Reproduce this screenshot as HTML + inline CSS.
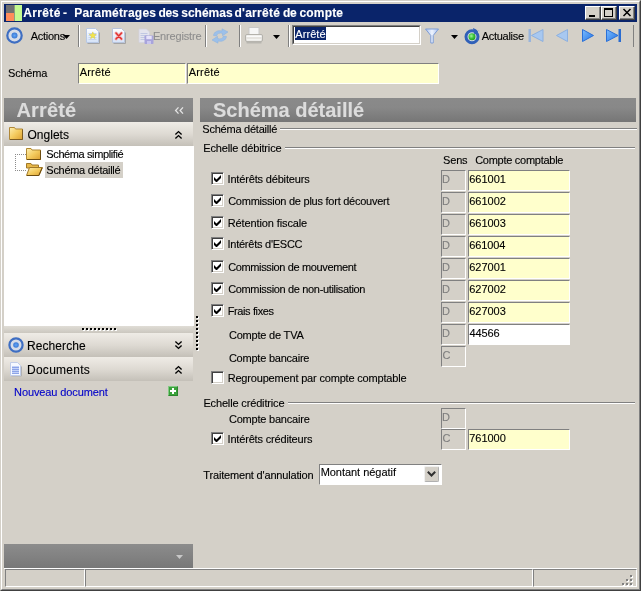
<!DOCTYPE html>
<html><head><meta charset="utf-8">
<style>
*{box-sizing:border-box;margin:0;padding:0}
html,body{width:641px;height:591px;overflow:hidden;background:#d4d0c8}
body{font-family:"Liberation Sans",sans-serif;font-size:11px;color:#000;position:relative}
.a{position:absolute}
.t{position:absolute;white-space:nowrap;line-height:normal;-webkit-text-stroke:0.12px currentColor}
.wb{position:absolute;top:6px;width:16px;height:14px;background:#d4d0c8;border:1px solid;border-color:#fff #404040 #404040 #fff;box-shadow:inset -1px -1px 0 #808080}
.inp{position:absolute;border:1px solid;border-color:#808080 #fff #fff #808080;background:#ffffcc}
.sb{position:absolute;left:441px;width:25px;height:21px;border:1px solid;border-color:#808080 #fff #fff #808080;background:#d4d0c8}
.hdr{position:absolute;height:24px;background:linear-gradient(#8a8a8a,#888 40%,#767676)}
.bar{position:absolute;left:4px;width:189px;background:linear-gradient(#efece6,#dedad3 50%,#c4c0b8)}
.cb{position:absolute;left:211px;width:13px;height:13px;background:#fff;border:1px solid;border-color:#808080 #fff #fff #808080;box-shadow:inset 1px 1px 0 #404040,inset -1px -1px 0 #d4d0c8}
.ln{position:absolute;height:2px;border-top:1px solid #808080;border-bottom:1px solid #fff}
.vs{position:absolute;top:25px;width:2px;height:22px;border-left:1px solid #808080;border-right:1px solid #fff}
svg{position:absolute;overflow:visible}
</style></head><body>
<!-- window frame -->
<div class="a" style="left:0;top:0;width:641px;height:591px;border:1px solid;border-color:#d4d0c8 #404040 #404040 #d4d0c8"></div>
<div class="a" style="left:1px;top:1px;width:639px;height:589px;border:1px solid;border-color:#fff #808080 #808080 #fff"></div>
<div class="a" style="left:4px;top:4px;width:633px;height:18px;background:#0a246a"></div>
<!-- title icon -->
<div class="a" style="left:6px;top:5px;width:8px;height:8px;background:#707070"></div>
<div class="a" style="left:6px;top:13px;width:8px;height:8px;background:#ff8c5a"></div>
<div class="a" style="left:14px;top:5px;width:8px;height:16px;background:#c4fa90;border-left:1px solid #8ca07c"></div>
<!-- window buttons -->
<div class="wb" style="left:585px"><div class="a" style="left:3px;top:8px;width:6px;height:2px;background:#000"></div></div>
<div class="wb" style="left:601px"><div class="a" style="left:2px;top:1px;width:9px;height:9px;border:1px solid #000;border-top-width:2px"></div></div>
<div class="wb" style="left:619px"><svg style="left:3px;top:2px" width="8" height="7" viewBox="0 0 8 7"><path d="M0.5 0 L7.5 7 M7.5 0 L0.5 7" stroke="#000" stroke-width="1.500" fill="none"/></svg></div>
<!-- toolbar -->
<svg style="left:6.300px;top:27.400px" width="17" height="17" viewBox="0 0 17 17"><defs><radialGradient id="cd"><stop offset="0" stop-color="#62a4f4"/><stop offset="1" stop-color="#3a78d4"/></radialGradient></defs><circle cx="8.500" cy="8.500" r="7.200" fill="#d6dce8" stroke="#3e6ec2" stroke-width="2.200"/><circle cx="8.500" cy="8.500" r="3" fill="url(#cd)"/></svg>
<svg style="left:63px;top:35px" width="7" height="4" viewBox="0 0 7 4"><path d="M0 0H7L3.5 4Z" fill="#000"/></svg>
<div class="vs" style="left:78px"></div>
<!-- new doc icon -->
<svg style="left:86px;top:28px" width="15" height="16" viewBox="0 0 15 16"><defs><linearGradient id="pg" x1="0" y1="0" x2="0" y2="1"><stop offset="0" stop-color="#fff"/><stop offset="1" stop-color="#d4e2f8"/></linearGradient></defs><path d="M1.500 15.500H13.500V4.500" stroke="#a4a4a4" fill="none"/><path d="M.5 .5H9.500L12.500 3.500V14.500H.5Z" fill="url(#pg)" stroke="#b8c8e4"/><path d="M2.500 5.500H10.500M2.500 7.500H10.500M2.500 9.500H10.500M2.500 11.500H10.500" stroke="#c4d4f0"/><path d="M6.800 3.900L7.740 6.310L10.320 6.460L8.320 8.090L8.970 10.590L6.800 9.200L4.630 10.590L5.280 8.090L3.280 6.460L5.860 6.310Z" fill="#f4e648" stroke="#d8cc50" stroke-width=".6"/></svg>
<!-- delete icon -->
<svg style="left:112px;top:28px" width="15" height="16" viewBox="0 0 15 16"><path d="M1.500 15.500H13.500V4.500" stroke="#a4a4a4" fill="none"/><path d="M.5 .5H9.500L12.500 3.500V14.500H.5Z" fill="url(#pg)" stroke="#b8c4dc"/><path d="M4 5L9.500 11M9.500 5L4 11" stroke="#f4b0b0" stroke-width="3" stroke-linecap="round"/><path d="M4 5L9.500 11M9.500 5L4 11" stroke="#e03030" stroke-width="1.400" stroke-linecap="round"/></svg>
<!-- save icon disabled -->
<svg style="left:138px;top:28px" width="16" height="17" viewBox="0 0 16 17"><path d="M1 1H8.500L11.500 4V14.500H1Z" fill="#e4e4ee" stroke="#d2d2de" stroke-width=".8"/><path d="M2.500 5.500H9.500M2.500 7.500H9.500M2.500 9.500H9.500M2.500 11.500H7" stroke="#b8c0e0" stroke-width=".8"/><rect x="6.500" y="7.500" width="9" height="8.500" rx=".8" fill="#a8a4dc"/><rect x="8.300" y="8" width="5.400" height="3.200" fill="#e6e2fa"/><rect x="9" y="13" width="4" height="3" fill="#cac6ee"/></svg>
<div class="vs" style="left:205px"></div>
<!-- refresh disabled -->
<svg style="left:212px;top:28px" width="16" height="16" viewBox="0 0 16 16"><path d="M1.500 7.500C2 3.500 6 2 10 3L10 .8L16 4L10.500 7.700L10.500 5.500C7.500 4.500 5 5.500 4.500 8Z" fill="#9cc0ea" stroke="#88b0de" stroke-width=".5"/><path d="M14.500 8.500C14 12.500 10 14 6 13L6 15.200L0 12L5.500 8.300L5.500 10.500C8.500 11.500 11 10.500 11.500 8Z" fill="#9cc0ea" stroke="#88b0de" stroke-width=".5"/></svg>
<div class="vs" style="left:239px"></div>
<!-- printer -->
<svg style="left:245px;top:27px" width="18" height="17" viewBox="0 0 18 17"><rect x="4" y=".5" width="10" height="8" fill="#f6f6f6" stroke="#c8c8c8"/><rect x=".5" y="7.500" width="17" height="7" rx="1.500" fill="#e6e4e0" stroke="#b4b2ac"/><rect x="1.500" y="8.500" width="15" height="1.500" fill="#fafafa"/><rect x="2" y="12" width="14" height="1.500" fill="#f4f4f2"/><rect x="1.500" y="14.500" width="15" height="2" fill="#b8b6b0"/></svg>
<svg style="left:273px;top:35px" width="7" height="4" viewBox="0 0 7 4"><path d="M0 0H7L3.500 4Z" fill="#000"/></svg>
<div class="vs" style="left:288px"></div>
<!-- text field -->
<div class="a" style="left:292px;top:25px;width:129px;height:20px;background:#fff;border:1px solid;border-color:#808080 #fff #fff #808080"></div>
<div class="a" style="left:293px;top:26px;width:127px;height:18px;border:1px solid;border-color:#404040 #d4d0c8 #d4d0c8 #404040"></div>
<div class="a" style="left:295px;top:27px;width:31px;height:13px;background:#0a246a"></div>
<!-- funnel -->
<svg style="left:425px;top:28px" width="14" height="16" viewBox="0 0 14 16"><defs><linearGradient id="fn" x1="0" y1="0" x2="1" y2="0"><stop offset="0" stop-color="#a8c0ee"/><stop offset=".5" stop-color="#eef4fe"/><stop offset="1" stop-color="#a8c0ee"/></linearGradient><radialGradient id="gb" cx=".4" cy=".4" r=".7"><stop offset="0" stop-color="#a4f49c"/><stop offset=".5" stop-color="#3cc43c"/><stop offset="1" stop-color="#1c941c"/></radialGradient></defs><path d="M.5 1H13.500L8.200 7.500V15H5.800V7.500Z" fill="url(#fn)" stroke="#7c9cd6"/></svg>
<svg style="left:451px;top:35px" width="7" height="4" viewBox="0 0 7 4"><path d="M0 0H7L3.500 4Z" fill="#000"/></svg>
<!-- actualise icon -->
<svg style="left:464px;top:28px" width="17" height="17" viewBox="0 0 17 17"><circle cx="8" cy="8.700" r="6" fill="#d8dee8" stroke="#3060b8" stroke-width="3"/><path d="M9 0L15.500 3L10.500 7Z" fill="#3060b8"/><path d="M12.500 .5L16 5.500" stroke="#d4d0c8" stroke-width="1.200"/><circle cx="8" cy="8.700" r="3.500" fill="url(#gb)"/></svg>
<!-- nav icons -->
<svg style="left:528px;top:29px" width="16" height="13" viewBox="0 0 16 13"><rect x="0.500" y="0" width="2.500" height="13" fill="#98b4dc"/><path d="M15 .5V12.500L3.500 6.500Z" fill="#a8c8f0" stroke="#8cb0e0"/></svg>
<svg style="left:556px;top:29px" width="12" height="13" viewBox="0 0 12 13"><path d="M11.500 .5V12.500L.5 6.500Z" fill="#a8c8f0" stroke="#8cb0e0"/></svg>
<svg style="left:582px;top:29px" width="12" height="13" viewBox="0 0 12 13"><defs><linearGradient id="ng" x1="0" y1="0" x2="1" y2="1"><stop offset="0" stop-color="#7cbcff"/><stop offset="1" stop-color="#2474e4"/></linearGradient></defs><path d="M.5 .5V12.500L11.500 6.500Z" fill="url(#ng)" stroke="#2a70d8"/></svg>
<svg style="left:606px;top:29px" width="16" height="13" viewBox="0 0 16 13"><path d="M.5 .5V12.500L12 6.500Z" fill="url(#ng)" stroke="#2a70d8"/><rect x="12.500" y="0" width="2.500" height="13" fill="#2a6cd0"/></svg>
<div class="a" style="left:633px;top:25px;width:1px;height:22px;background:#808080"></div>
<!-- schema row -->
<div class="inp" style="left:78px;top:63px;width:108px;height:21px"></div>
<div class="inp" style="left:187px;top:63px;width:252px;height:21px"></div>
<!-- left panel -->
<div class="hdr" style="left:4px;top:98px;width:189px"></div>
<svg style="left:175px;top:107px" width="9" height="7" viewBox="0 0 9 7"><path d="M3.500 .4L.6 3.500 3.500 6.600M8 .4L5.100 3.500 8 6.600" stroke="#e4e4e4" stroke-width="1.300" fill="none"/></svg>
<div class="bar" style="top:122px;height:24px"></div>
<!-- folder icon onglets -->
<svg style="left:9px;top:126px" width="15" height="14" viewBox="0 0 15 14"><defs><linearGradient id="fg" x1="0" y1="0" x2="1" y2="1"><stop offset="0" stop-color="#fdeeb0"/><stop offset=".5" stop-color="#f4cc60"/><stop offset="1" stop-color="#dca030"/></linearGradient></defs><path d="M.5 1.500H5.500L6.500 3H13.500V13.500H.5Z" fill="url(#fg)" stroke="#b08838"/><path d="M13.500 3.500V13.500H1" stroke="#7c5c20" fill="none"/></svg>
<svg style="left:175px;top:131px" width="7" height="8" viewBox="0 0 7 8"><path d="M.4 3.500L3.500 .6 6.600 3.500M.4 7.500L3.500 4.600 6.600 7.500" stroke="#000" stroke-width="1.400" fill="none"/></svg>
<div class="a" style="left:4px;top:146px;width:190px;height:180px;background:#fff"></div>
<!-- tree lines -->
<div class="a" style="left:15px;top:154px;width:1px;height:17px;border-left:1px dotted #8c8c8c"></div>
<div class="a" style="left:15px;top:154px;width:11px;height:1px;border-top:1px dotted #8c8c8c"></div>
<div class="a" style="left:15px;top:170px;width:11px;height:1px;border-top:1px dotted #8c8c8c"></div>
<svg style="left:26px;top:148px" width="16" height="12" viewBox="0 0 16 12"><path d="M.5 .5H5L6 2H14.500V11.500H.5Z" fill="url(#fg)" stroke="#b08830"/><path d="M14.500 2.500V11.500H1" stroke="#6c4c10" fill="none"/></svg>
<div class="a" style="left:45px;top:162px;width:78px;height:16px;background:#d4d0c8"></div>
<svg style="left:26px;top:163px" width="17" height="13" viewBox="0 0 17 13"><path d="M.5 .5H5L6 2H12.500V5H.5Z" fill="#e8b848" stroke="#a07828"/><path d="M3.500 4.500H16.500L13 12.500H.5Z" fill="url(#fg)" stroke="#a07828"/><path d="M16 5L12.800 12.500H1" stroke="#6c4c10" fill="none"/></svg>
<!-- splitter -->
<div class="a" style="left:4px;top:326px;width:189px;height:7px;background:linear-gradient(#e0ddd6,#cbc7bf)"></div>
<div class="a" style="left:83px;top:329px;width:34px;height:2px;background:repeating-linear-gradient(90deg,#fff 0,#fff 2px,transparent 2px,transparent 4px)"></div>
<div class="a" style="left:82px;top:328px;width:34px;height:2px;background:repeating-linear-gradient(90deg,#000 0,#000 2px,transparent 2px,transparent 4px)"></div>
<div class="bar" style="top:333px;height:24px"></div>
<svg style="left:8px;top:337px" width="16" height="16" viewBox="0 0 16 16"><circle cx="8" cy="8" r="6.600" fill="#d6dce8" stroke="#3e6ec2" stroke-width="2.200"/><circle cx="8" cy="8" r="2.800" fill="url(#cd)"/></svg>
<svg style="left:175px;top:341px" width="7" height="8" viewBox="0 0 7 8"><path d="M.4 .5L3.500 3.400 6.600 .5M.4 4.500L3.500 7.400 6.600 4.500" stroke="#000" stroke-width="1.400" fill="none"/></svg>
<div class="bar" style="top:357px;height:24px"></div>
<svg style="left:10px;top:362px" width="13" height="15" viewBox="0 0 13 15"><path d="M1.500 14H11.500V4.500" stroke="#b0b0b0" fill="none"/><path d="M.5 .5H7.500L10.500 3.500V13.500H.5Z" fill="#f6f9ff" stroke="#c0cce8"/><path d="M2 5.500H9M2 7.500H9M2 9.500H9M2 11.500H9" stroke="#8ca4e8"/><path d="M2 4.500H9M2 6.500H9M2 8.500H9M2 10.500H9" stroke="#c4d2f8"/></svg>
<svg style="left:175px;top:366px" width="7" height="8" viewBox="0 0 7 8"><path d="M.4 3.500L3.500 .6 6.600 3.500M.4 7.500L3.500 4.600 6.600 7.500" stroke="#000" stroke-width="1.400" fill="none"/></svg>
<!-- green plus -->
<div class="a" style="left:168px;top:386px;width:10px;height:10px;background:#3aa23a;border:1px solid;border-color:#84c884 #2c842c #2c842c #84c884"></div>
<div class="a" style="left:172px;top:388px;width:2px;height:6px;background:#fff"></div>
<div class="a" style="left:170px;top:390px;width:6px;height:2px;background:#fff"></div>
<!-- bottom bar -->
<div class="a" style="left:4px;top:544px;width:189px;height:24px;background:linear-gradient(#8c8c8c,#787878)"></div>
<svg style="left:176px;top:555px" width="7" height="4" viewBox="0 0 7 4"><path d="M0 0H7L3.500 4Z" fill="#c8c8c8"/></svg>
<!-- vertical splitter dots -->
<div class="a" style="left:197px;top:317px;width:2px;height:34px;background:repeating-linear-gradient(180deg,#fff 0,#fff 2px,transparent 2px,transparent 4px)"></div>
<div class="a" style="left:196px;top:316px;width:2px;height:34px;background:repeating-linear-gradient(180deg,#000 0,#000 2px,transparent 2px,transparent 4px)"></div>
<!-- right panel -->
<div class="hdr" style="left:200px;top:98px;width:436px"></div>
<div class="ln" style="left:280px;top:128px;width:357px"></div>
<div class="ln" style="left:285px;top:147px;width:350px"></div>
<div class="ln" style="left:288px;top:402px;width:347px"></div>
<div class="sb" style="top:170px"></div>
<div class="inp" style="left:468px;top:170px;width:102px;height:21px;background:#ffffcc"></div>
<div class="sb" style="top:192px"></div>
<div class="inp" style="left:468px;top:192px;width:102px;height:21px;background:#ffffcc"></div>
<div class="sb" style="top:214px"></div>
<div class="inp" style="left:468px;top:214px;width:102px;height:21px;background:#ffffcc"></div>
<div class="sb" style="top:236px"></div>
<div class="inp" style="left:468px;top:236px;width:102px;height:21px;background:#ffffcc"></div>
<div class="sb" style="top:258px"></div>
<div class="inp" style="left:468px;top:258px;width:102px;height:21px;background:#ffffcc"></div>
<div class="sb" style="top:280px"></div>
<div class="inp" style="left:468px;top:280px;width:102px;height:21px;background:#ffffcc"></div>
<div class="sb" style="top:302px"></div>
<div class="inp" style="left:468px;top:302px;width:102px;height:21px;background:#ffffcc"></div>
<div class="sb" style="top:324px"></div>
<div class="inp" style="left:468px;top:324px;width:102px;height:21px;background:#fff"></div>
<div class="sb" style="top:346px"></div>
<div class="sb" style="top:408px"></div>
<div class="sb" style="top:429px"></div>
<div class="inp" style="left:468px;top:429px;width:102px;height:21px"></div>
<div class="cb" style="top:172px"><svg style="left:2px;top:2px" width="7" height="7" viewBox="0 0 7 7"><path d="M0 2L0 5L2 7H3L7 3V0L2.500 4.500Z" fill="#000"/></svg></div>
<div class="cb" style="top:194px"><svg style="left:2px;top:2px" width="7" height="7" viewBox="0 0 7 7"><path d="M0 2L0 5L2 7H3L7 3V0L2.500 4.500Z" fill="#000"/></svg></div>
<div class="cb" style="top:216px"><svg style="left:2px;top:2px" width="7" height="7" viewBox="0 0 7 7"><path d="M0 2L0 5L2 7H3L7 3V0L2.500 4.500Z" fill="#000"/></svg></div>
<div class="cb" style="top:237px"><svg style="left:2px;top:2px" width="7" height="7" viewBox="0 0 7 7"><path d="M0 2L0 5L2 7H3L7 3V0L2.500 4.500Z" fill="#000"/></svg></div>
<div class="cb" style="top:260px"><svg style="left:2px;top:2px" width="7" height="7" viewBox="0 0 7 7"><path d="M0 2L0 5L2 7H3L7 3V0L2.500 4.500Z" fill="#000"/></svg></div>
<div class="cb" style="top:282px"><svg style="left:2px;top:2px" width="7" height="7" viewBox="0 0 7 7"><path d="M0 2L0 5L2 7H3L7 3V0L2.500 4.500Z" fill="#000"/></svg></div>
<div class="cb" style="top:304px"><svg style="left:2px;top:2px" width="7" height="7" viewBox="0 0 7 7"><path d="M0 2L0 5L2 7H3L7 3V0L2.500 4.500Z" fill="#000"/></svg></div>
<div class="cb" style="top:371px"></div>
<div class="cb" style="top:432px"><svg style="left:2px;top:2px" width="7" height="7" viewBox="0 0 7 7"><path d="M0 2L0 5L2 7H3L7 3V0L2.500 4.500Z" fill="#000"/></svg></div>
<!-- combo -->
<div class="a" style="left:319px;top:464px;width:123px;height:21px;background:#fff;border:1px solid;border-color:#808080 #fff #fff #808080"></div>
<div class="a" style="left:424px;top:466px;width:15px;height:16px;background:#d4d0c8;border:1px solid;border-color:#f0f0f0 #b0b0b0 #b0b0b0 #f0f0f0;border-radius:2px"></div>
<svg style="left:427px;top:471px" width="9" height="6" viewBox="0 0 9 6"><path d="M.8 .8L4.500 4.500 8.200 .8" stroke="#303030" stroke-width="2" fill="none"/></svg>
<!-- status bar -->
<div class="a" style="left:4px;top:568px;width:633px;height:1px;background:#fff"></div>
<div class="a" style="left:5px;top:569px;width:80px;height:18px;border:1px solid;border-color:#808080 #fff #fff #808080"></div>
<div class="a" style="left:85px;top:569px;width:448px;height:18px;border:1px solid;border-color:#808080 #fff #fff #808080"></div>
<div class="a" style="left:533px;top:569px;width:104px;height:18px;border:1px solid;border-color:#808080 #fff #fff #808080"></div>
<svg style="left:622px;top:575px" width="11" height="11" viewBox="0 0 11 11"><g fill="#fff" transform="translate(1 1)"><rect x="8" y="0" width="2" height="2"/><rect x="4" y="4" width="2" height="2"/><rect x="8" y="4" width="2" height="2"/><rect x="0" y="8" width="2" height="2"/><rect x="4" y="8" width="2" height="2"/><rect x="8" y="8" width="2" height="2"/></g><g fill="#808080"><rect x="8" y="0" width="2" height="2"/><rect x="4" y="4" width="2" height="2"/><rect x="8" y="4" width="2" height="2"/><rect x="0" y="8" width="2" height="2"/><rect x="4" y="8" width="2" height="2"/><rect x="8" y="8" width="2" height="2"/></g></svg>
<div class="a" style="left:0;top:0;width:641px;height:591px;will-change:transform">
<span id="tt1" class="t" style="left:23.31px;top:6px;font-size:12px;font-weight:bold;color:#fff;letter-spacing:0.343px">Arrêté</span>
<span id="tt2" class="t" style="left:62.95px;top:6px;font-size:12px;font-weight:bold;color:#fff;letter-spacing:0.000px">-</span>
<span id="tt3" class="t" style="left:74.27px;top:6px;font-size:12px;font-weight:bold;color:#fff;letter-spacing:0.210px">Paramétrages</span>
<span id="tt4" class="t" style="left:158.47px;top:6px;font-size:12px;font-weight:bold;color:#fff;letter-spacing:-0.269px">des</span>
<span id="tt5" class="t" style="left:181.24px;top:6px;font-size:12px;font-weight:bold;color:#fff;letter-spacing:-0.008px">schémas</span>
<span id="tt6" class="t" style="left:234.47px;top:6px;font-size:12px;font-weight:bold;color:#fff;letter-spacing:0.256px">d'arrêté</span>
<span id="tt7" class="t" style="left:282.97px;top:6px;font-size:12px;font-weight:bold;color:#fff;letter-spacing:-0.286px">de</span>
<span id="tt8" class="t" style="left:299.52px;top:6px;font-size:12px;font-weight:bold;color:#fff;letter-spacing:0.165px">compte</span>
<span id="act" class="t" style="left:30.72px;top:30px;font-size:11px;font-weight:normal;color:#000;letter-spacing:-0.268px">Actions</span>
<span id="enr" class="t" style="left:152.92px;top:30px;font-size:11px;font-weight:normal;color:#8e8e8e;letter-spacing:-0.164px">Enregistre</span>
<span id="tbf" class="t" style="left:295.32px;top:28px;font-size:11px;font-weight:normal;color:#fff;letter-spacing:0.063px">Arrêté</span>
<span id="actu" class="t" style="left:481.72px;top:30px;font-size:11px;font-weight:normal;color:#000;letter-spacing:-0.278px">Actualise</span>
<span id="sch" class="t" style="left:8.04px;top:67px;font-size:11px;font-weight:normal;color:#000;letter-spacing:-0.210px">Schéma</span>
<span id="in1" class="t" style="left:79.72px;top:66px;font-size:11px;font-weight:normal;color:#000;letter-spacing:0.180px">Arrêté</span>
<span id="in2" class="t" style="left:188.72px;top:66px;font-size:11px;font-weight:normal;color:#000;letter-spacing:0.180px">Arrêté</span>
<span id="h1" class="t" style="left:16.57px;top:99px;font-size:20px;font-weight:bold;color:#dcdcdc;letter-spacing:0.114px">Arrêté</span>
<span id="h2" class="t" style="left:213.00px;top:99px;font-size:20px;font-weight:bold;color:#dcdcdc;letter-spacing:-0.004px">Schéma détaillé</span>
<span id="ong" class="t" style="left:27.44px;top:128px;font-size:12px;font-weight:normal;color:#000;letter-spacing:0.027px">Onglets</span>
<span id="tr1" class="t" style="left:46.34px;top:148px;font-size:11px;font-weight:normal;color:#000;letter-spacing:-0.392px">Schéma simplifié</span>
<span id="tr2" class="t" style="left:46.34px;top:164px;font-size:11px;font-weight:normal;color:#000;letter-spacing:-0.288px">Schéma détaillé</span>
<span id="rec" class="t" style="left:26.99px;top:339px;font-size:12px;font-weight:normal;color:#000;letter-spacing:0.079px">Recherche</span>
<span id="doc" class="t" style="left:26.99px;top:363px;font-size:12px;font-weight:normal;color:#000;letter-spacing:0.273px">Documents</span>
<span id="nd" class="t" style="left:14.09px;top:386px;font-size:11px;font-weight:normal;color:#0000c8;letter-spacing:-0.104px">Nouveau document</span>
<span id="l1" class="t" style="left:202.34px;top:123px;font-size:11px;font-weight:normal;color:#000;letter-spacing:-0.234px">Schéma détaillé</span>
<span id="l2" class="t" style="left:203.32px;top:142px;font-size:11px;font-weight:normal;color:#000;letter-spacing:-0.152px">Echelle débitrice</span>
<span id="sens" class="t" style="left:443.09px;top:154px;font-size:11px;font-weight:normal;color:#000;letter-spacing:-0.185px">Sens</span>
<span id="cc" class="t" style="left:475.17px;top:154px;font-size:11px;font-weight:normal;color:#000;letter-spacing:-0.269px">Compte comptable</span>
<span id="r1" class="t" style="left:227.53px;top:173px;font-size:11px;font-weight:normal;color:#000;letter-spacing:-0.167px">Intérêts débiteurs</span>
<span id="r2" class="t" style="left:228.17px;top:195px;font-size:11px;font-weight:normal;color:#000;letter-spacing:-0.248px">Commission de plus fort découvert</span>
<span id="r3" class="t" style="left:227.67px;top:217px;font-size:11px;font-weight:normal;color:#000;letter-spacing:-0.109px">Rétention fiscale</span>
<span id="r4" class="t" style="left:227.53px;top:238px;font-size:11px;font-weight:normal;color:#000;letter-spacing:-0.248px">Intérêts d'ESCC</span>
<span id="r5" class="t" style="left:228.17px;top:261px;font-size:11px;font-weight:normal;color:#000;letter-spacing:-0.361px">Commission de mouvement</span>
<span id="r6" class="t" style="left:228.17px;top:283px;font-size:11px;font-weight:normal;color:#000;letter-spacing:-0.336px">Commission de non-utilisation</span>
<span id="r7" class="t" style="left:227.67px;top:305px;font-size:11px;font-weight:normal;color:#000;letter-spacing:-0.373px">Frais fixes</span>
<span id="r8" class="t" style="left:228.92px;top:329px;font-size:11px;font-weight:normal;color:#000;letter-spacing:-0.196px">Compte de TVA</span>
<span id="r9" class="t" style="left:228.92px;top:352px;font-size:11px;font-weight:normal;color:#000;letter-spacing:-0.228px">Compte bancaire</span>
<span id="r10" class="t" style="left:227.67px;top:372px;font-size:11px;font-weight:normal;color:#000;letter-spacing:-0.178px">Regroupement par compte comptable</span>
<span id="l3" class="t" style="left:203.42px;top:397px;font-size:11px;font-weight:normal;color:#000;letter-spacing:-0.152px">Echelle créditrice</span>
<span id="r11" class="t" style="left:228.92px;top:413px;font-size:11px;font-weight:normal;color:#000;letter-spacing:-0.208px">Compte bancaire</span>
<span id="r12" class="t" style="left:227.53px;top:433px;font-size:11px;font-weight:normal;color:#000;letter-spacing:-0.174px">Intérêts créditeurs</span>
<span id="ta" class="t" style="left:203.37px;top:469px;font-size:11px;font-weight:normal;color:#000;letter-spacing:-0.180px">Traitement d'annulation</span>
<span id="mn" class="t" style="left:320.65px;top:466px;font-size:11px;font-weight:normal;color:#000;letter-spacing:-0.037px">Montant négatif</span>
<span id="v0" class="t" style="left:469.23px;top:173px;font-size:11px;font-weight:normal;color:#000;letter-spacing:-0.009px">661001</span>
<span id="s0" class="t" style="left:441.88px;top:173px;font-size:11px;font-weight:normal;color:#7e7e7e;letter-spacing:0.000px">D</span>
<span id="v1" class="t" style="left:469.23px;top:195px;font-size:11px;font-weight:normal;color:#000;letter-spacing:-0.005px">661002</span>
<span id="s1" class="t" style="left:441.88px;top:195px;font-size:11px;font-weight:normal;color:#7e7e7e;letter-spacing:0.000px">D</span>
<span id="v2" class="t" style="left:469.23px;top:217px;font-size:11px;font-weight:normal;color:#000;letter-spacing:-0.020px">661003</span>
<span id="s2" class="t" style="left:441.88px;top:217px;font-size:11px;font-weight:normal;color:#7e7e7e;letter-spacing:0.000px">D</span>
<span id="v3" class="t" style="left:469.23px;top:239px;font-size:11px;font-weight:normal;color:#000;letter-spacing:-0.097px">661004</span>
<span id="s3" class="t" style="left:441.88px;top:239px;font-size:11px;font-weight:normal;color:#7e7e7e;letter-spacing:0.000px">D</span>
<span id="v4" class="t" style="left:469.23px;top:261px;font-size:11px;font-weight:normal;color:#000;letter-spacing:-0.009px">627001</span>
<span id="s4" class="t" style="left:441.88px;top:261px;font-size:11px;font-weight:normal;color:#7e7e7e;letter-spacing:0.000px">D</span>
<span id="v5" class="t" style="left:469.23px;top:283px;font-size:11px;font-weight:normal;color:#000;letter-spacing:-0.005px">627002</span>
<span id="s5" class="t" style="left:441.88px;top:283px;font-size:11px;font-weight:normal;color:#7e7e7e;letter-spacing:0.000px">D</span>
<span id="v6" class="t" style="left:469.23px;top:305px;font-size:11px;font-weight:normal;color:#000;letter-spacing:-0.020px">627003</span>
<span id="s6" class="t" style="left:441.88px;top:305px;font-size:11px;font-weight:normal;color:#7e7e7e;letter-spacing:0.000px">D</span>
<span id="v7" class="t" style="left:469.56px;top:327px;font-size:11px;font-weight:normal;color:#000;letter-spacing:-0.122px">44566</span>
<span id="s7" class="t" style="left:441.88px;top:327px;font-size:11px;font-weight:normal;color:#7e7e7e;letter-spacing:0.000px">D</span>
<span id="s8" class="t" style="left:442.42px;top:349px;font-size:11px;font-weight:normal;color:#7e7e7e;letter-spacing:0.000px">C</span>
<span id="s9" class="t" style="left:441.88px;top:411px;font-size:11px;font-weight:normal;color:#7e7e7e;letter-spacing:0.000px">D</span>
<span id="s10" class="t" style="left:442.42px;top:432px;font-size:11px;font-weight:normal;color:#7e7e7e;letter-spacing:0.000px">C</span>
<span id="v10" class="t" style="left:469.22px;top:432px;font-size:11px;font-weight:normal;color:#000;letter-spacing:-0.022px">761000</span>
</div>
</body></html>
